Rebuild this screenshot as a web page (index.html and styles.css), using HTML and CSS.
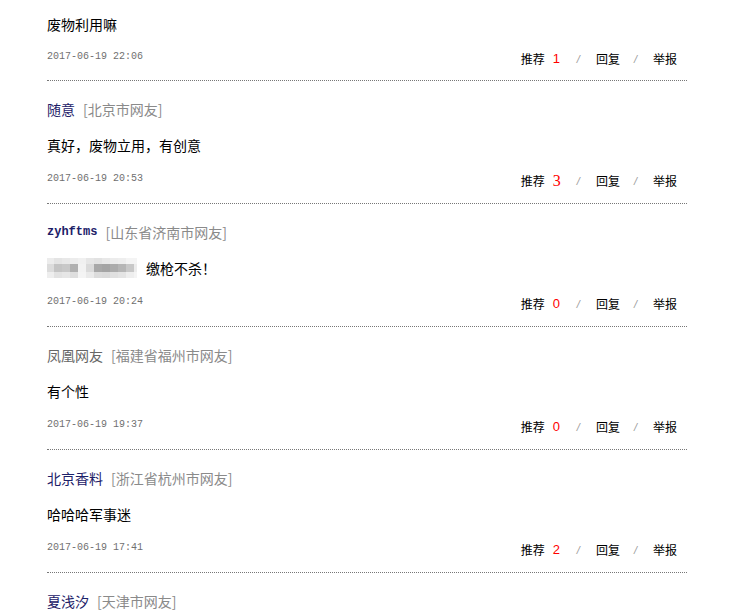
FILE: index.html
```html
<!DOCTYPE html>
<html lang="zh">
<head>
<meta charset="utf-8">
<link rel="stylesheet" href="styles.css">
</head>
<body>
<div class="list">
  <div class="item first">
    <p class="text">废物利用嘛</p>
    <div class="foot">
      <span class="date">2017-06-19 22:06</span>
      <div class="acts"><span>推荐</span><span class="num">1</span><span class="sep">/</span><span>回复</span><span class="sep">/</span><span>举报</span></div>
    </div>
  </div>
  <div class="item">
    <div class="head"><span class="name">随意</span><span class="loc">[北京市网友]</span></div>
    <p class="text">真好，废物立用，有创意</p>
    <div class="foot">
      <span class="date">2017-06-19 20:53</span>
      <div class="acts"><span>推荐</span><span class="num serif">3</span><span class="sep">/</span><span>回复</span><span class="sep">/</span><span>举报</span></div>
    </div>
  </div>
  <div class="item">
    <div class="head"><span class="name mono">zyhftms</span><span class="loc">[山东省济南市网友]</span></div>
    <p class="text"><svg class="blur" width="90" height="20" viewBox="0 0 90 20">
      <rect x="0" y="0" width="90" height="20" fill="#f4f4f4"/>
      <rect x="0" y="0" width="7" height="6" fill="#ececec"/><rect x="7" y="0" width="8" height="6" fill="#e4e4e4"/><rect x="15" y="0" width="8" height="6" fill="#e8e8e8"/><rect x="23" y="0" width="8" height="6" fill="#ececec"/><rect x="31" y="0" width="8" height="6" fill="#f0f0f0"/><rect x="39" y="0" width="8" height="6" fill="#e6e6e6"/><rect x="47" y="0" width="8" height="6" fill="#e2e2e2"/><rect x="55" y="0" width="8" height="6" fill="#e8e8e8"/><rect x="63" y="0" width="8" height="6" fill="#ececec"/><rect x="71" y="0" width="8" height="6" fill="#eeeeee"/>
      <rect x="0" y="6" width="7" height="8" fill="#dcdcdc"/><rect x="7" y="6" width="8" height="8" fill="#c4c4c4"/><rect x="15" y="6" width="8" height="8" fill="#c8c8c8"/><rect x="23" y="6" width="8" height="8" fill="#b0b0b0"/><rect x="31" y="6" width="8" height="8" fill="#f2f2f2"/><rect x="39" y="6" width="8" height="8" fill="#dadada"/><rect x="47" y="6" width="8" height="8" fill="#a8a8a8"/><rect x="55" y="6" width="8" height="8" fill="#a4a4a4"/><rect x="63" y="6" width="8" height="8" fill="#acacac"/><rect x="71" y="6" width="8" height="8" fill="#b6b6b6"/><rect x="79" y="6" width="8" height="8" fill="#c8c8c8"/><rect x="87" y="6" width="3" height="8" fill="#ececec"/>
      <rect x="0" y="14" width="7" height="6" fill="#eeeeee"/><rect x="7" y="14" width="8" height="6" fill="#e2e2e2"/><rect x="15" y="14" width="8" height="6" fill="#e6e6e6"/><rect x="23" y="14" width="8" height="6" fill="#dedede"/><rect x="31" y="14" width="8" height="6" fill="#f4f4f4"/><rect x="39" y="14" width="8" height="6" fill="#eaeaea"/><rect x="47" y="14" width="8" height="6" fill="#dcdcdc"/><rect x="55" y="14" width="8" height="6" fill="#dadada"/><rect x="63" y="14" width="8" height="6" fill="#e0e0e0"/><rect x="71" y="14" width="8" height="6" fill="#e4e4e4"/><rect x="79" y="14" width="8" height="6" fill="#eeeeee"/>
    </svg>缴枪不杀！</p>
    <div class="foot">
      <span class="date">2017-06-19 20:24</span>
      <div class="acts"><span>推荐</span><span class="num">0</span><span class="sep">/</span><span>回复</span><span class="sep">/</span><span>举报</span></div>
    </div>
  </div>
  <div class="item">
    <div class="head"><span class="name grey">凤凰网友</span><span class="loc">[福建省福州市网友]</span></div>
    <p class="text">有个性</p>
    <div class="foot">
      <span class="date">2017-06-19 19:37</span>
      <div class="acts"><span>推荐</span><span class="num">0</span><span class="sep">/</span><span>回复</span><span class="sep">/</span><span>举报</span></div>
    </div>
  </div>
  <div class="item">
    <div class="head"><span class="name">北京香料</span><span class="loc">[浙江省杭州市网友]</span></div>
    <p class="text">哈哈哈军事迷</p>
    <div class="foot">
      <span class="date">2017-06-19 17:41</span>
      <div class="acts"><span>推荐</span><span class="num">2</span><span class="sep">/</span><span>回复</span><span class="sep">/</span><span>举报</span></div>
    </div>
  </div>
  <div class="item">
    <div class="head"><span class="name">夏浅汐</span><span class="loc">[天津市网友]</span></div>
    <p class="text">&nbsp;</p>
  </div>
</div>
</body>
</html>
```
FILE: styles.css
```css
html, body {
  margin: 0;
  padding: 0;
  background: #fff;
}
body {
  font-family: "Noto Sans CJK SC", "Liberation Sans", sans-serif;
  color: #000;
  overflow: hidden;
}
.list {
  width: 640px;
  margin-left: 47px;
}
.item {
  padding-top: 18px;
  padding-bottom: 14px;
  border-bottom: 1px dotted #777;
}
.item.first {
  padding-top: 0;
  padding-bottom: 13px;
}
.head {
  height: 20px;
  line-height: 20px;
  font-size: 14px;
  display: flex;
  align-items: center;
}
.name {
  color: #1c2068;
  margin-right: 8px;
}
.name.grey {
  color: #666;
}
.name.mono {
  font-family: "Liberation Mono", monospace;
  font-size: 12px;
  font-weight: bold;
}
.loc {
  color: #8a8a8a;
}
.text {
  margin: 16px 0 14px;
  height: 20px;
  line-height: 20px;
  font-size: 14px;
  display: flex;
  align-items: center;
}
.first .text {
  margin-top: 14px;
  margin-bottom: 13px;
}
.blur {
  display: block;
  margin-right: 9px;
}
.foot {
  height: 20px;
  display: flex;
  justify-content: space-between;
  align-items: flex-start;
}
.date {
  font-family: "Liberation Mono", monospace;
  font-size: 10px;
  color: #707070;
  line-height: 20px;
}
.acts {
  margin-top: 2px;
  padding-right: 10px;
  display: flex;
  align-items: center;
  font-size: 12px;
  line-height: 20px;
}
.num {
  color: #f00;
  font-family: "Liberation Sans", sans-serif;
  font-size: 13px;
  margin-left: 8px;
  min-width: 10px;
}
.num.serif {
  font-family: "Liberation Serif", serif;
  font-size: 16px;
}
.sep {
  color: #999;
  font-family: "Liberation Sans", sans-serif;
  font-style: italic;
  font-size: 11px;
  margin: 0 16px 0 14px;
}
```
